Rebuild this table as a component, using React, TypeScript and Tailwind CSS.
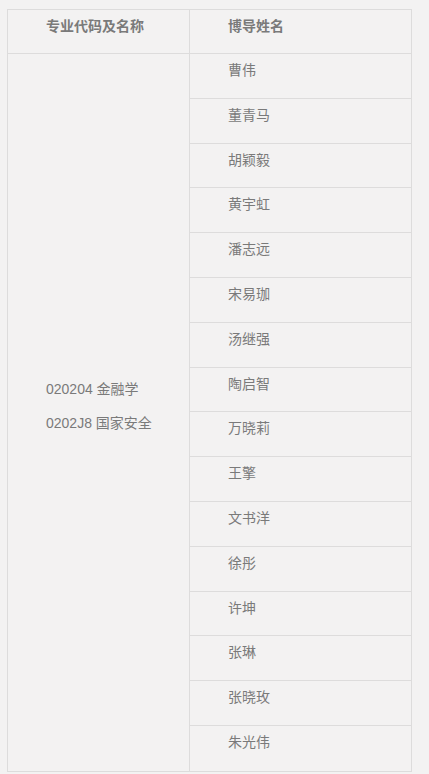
import React from "react";

const advisors = [
  "曹伟",
  "董青马",
  "胡颖毅",
  "黄宇虹",
  "潘志远",
  "宋易珈",
  "汤继强",
  "陶启智",
  "万晓莉",
  "王擎",
  "文书洋",
  "徐彤",
  "许坤",
  "张琳",
  "张晓玫",
  "朱光伟",
];

const majors = ["020204 金融学", "0202J8 国家安全"];

export default function App() {
  return (
    <div
      className="min-h-[774px] w-full bg-[#f3f2f2] pt-[9px] pl-[7px] text-[14px] text-[#7a7a7a]"
      style={{ fontFamily: '"Liberation Sans", "Noto Sans CJK SC", sans-serif' }}
    >
      <div className="w-[405px] border border-[#dddcdc]">
        {/* header */}
        <div className="flex h-[44px] border-b border-[#dddcdc] font-bold">
          <div className="w-[182px] border-r border-[#dddcdc] pl-[38px] pt-[6px] leading-[20px]">
            专业代码及名称
          </div>
          <div className="flex-1 pl-[38px] pt-[6px] leading-[20px]">博导姓名</div>
        </div>

        {/* body */}
        <div className="flex">
          <div className="flex w-[182px] flex-col justify-center gap-[14px] border-r border-[#dddcdc] pb-[12px] pl-[38px] leading-[20px]">
            {majors.map((m) => (
              <p key={m}>{m}</p>
            ))}
          </div>
          <div className="flex-1">
            {advisors.map((name, i) => (
              <div
                key={name}
                className={`h-[44.8px] pl-[38px] pt-[6px] leading-[20px] ${
                  i < advisors.length - 1 ? "border-b border-[#dddcdc]" : ""
                }`}
              >
                {name}
              </div>
            ))}
          </div>
        </div>
      </div>
    </div>
  );
}
